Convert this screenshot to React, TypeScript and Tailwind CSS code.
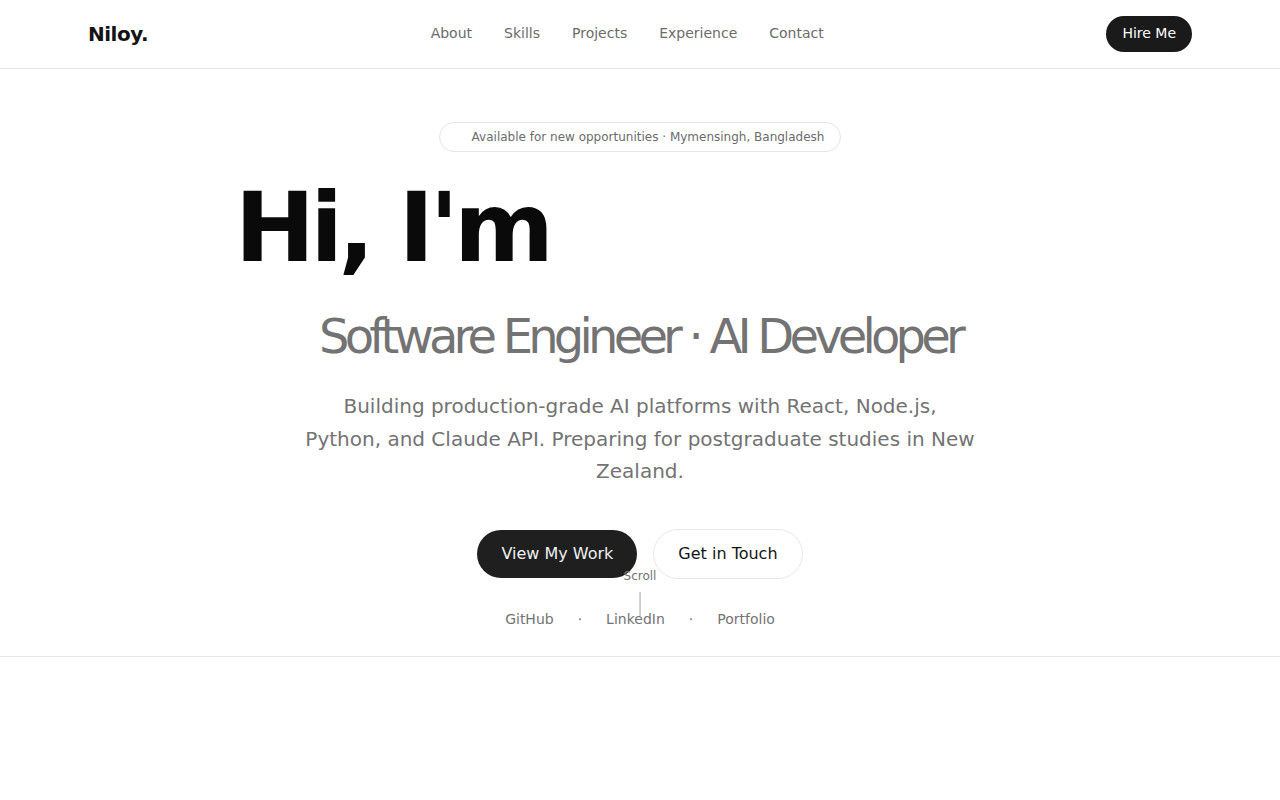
export default function App() {
  return (
    <div className="min-h-[800px] bg-white font-['DejaVu_Sans',sans-serif]">
      <header className="h-[69px] border-b border-[#e5e5e5] bg-white">
        <div className="mx-auto flex h-full max-w-6xl items-center justify-between px-6">
          <div className="text-xl font-bold tracking-tight text-[#141414]">Niloy.</div>
          <nav className="flex items-center gap-8 pb-0.5 text-sm text-[#6b6b6b]">
            <a>About</a>
            <a>Skills</a>
            <a>Projects</a>
            <a>Experience</a>
            <a>Contact</a>
          </nav>
          <button className="rounded-full bg-[#1a1a1a] px-4 pt-[7px] pb-[9px] text-sm text-white">Hire Me</button>
        </div>
      </header>

      <section className="relative border-b border-[#e5e5e5] pt-[53px] pb-[27px]">
        <div className="mx-auto flex max-w-6xl flex-col items-center px-6 text-center">
          <div className="flex items-center gap-2 rounded-full border border-[#e5e5e5] px-4 py-1.5 text-xs text-[#6b6b6b]">
            <span className="h-2 w-2 rounded-full bg-transparent" />
            <span>Available for new opportunities · Mymensingh, Bangladesh</span>
          </div>

          <h1 className="mt-7 whitespace-nowrap text-8xl font-bold leading-none tracking-tighter text-[#0a0a0a]">
            Hi, I'm <span className="text-transparent">Niloy Roy</span>
          </h1>

          <h2 className="mt-[36px] mb-[2px] whitespace-nowrap text-5xl leading-none tracking-[-0.1em] text-[#737373]">
            Software Engineer · AI Developer
          </h2>

          <p className="mt-7 max-w-2xl text-xl leading-relaxed text-[#737373]">
            Building production-grade AI platforms with React, Node.js, Python, and Claude API. Preparing for postgraduate studies in New Zealand.
          </p>

          <div className="mt-[41px] flex items-center gap-4">
            <button className="rounded-full bg-[#1f1f1f] px-6 py-3 text-base text-[#f0f0f0]">View My Work</button>
            <button className="rounded-full border border-[#e8e8e8] bg-white px-6 py-3 text-base text-[#141414]">Get in Touch</button>
          </div>

          <div className="mt-[30px] flex items-center gap-6 text-sm text-[#737373]">
            <a>GitHub</a>
            <span>·</span>
            <a>LinkedIn</a>
            <span>·</span>
            <a>Portfolio</a>
          </div>
        </div>

        <div className="absolute bottom-10 left-1/2 flex -translate-x-1/2 flex-col items-center gap-2">
          <span className="text-xs text-[#737373]">Scroll</span>
          <span className="h-6 w-px bg-[#a3a3a3]" />
        </div>
      </section>
    </div>
  );
}
